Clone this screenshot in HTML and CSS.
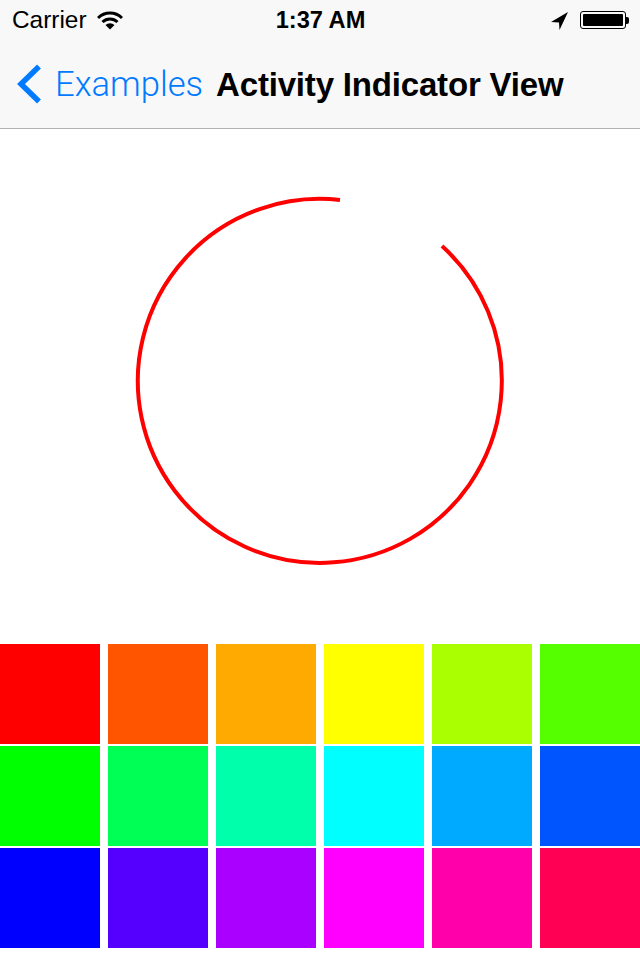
FILE: index.html
```html
<!DOCTYPE html>
<html lang="en">
<head>
  <meta charset="UTF-8" />
  <meta name="viewport" content="width=device-width, initial-scale=1.0"/>
  <title>Activity Indicator View</title>
  <link rel="stylesheet" href="styles.css">
</head>
<body>
  <div class="header">
    <div class="status-bar">
      <div class="status-left">
        <span class="carrier">Carrier</span>
        <svg class="wifi" width="26" height="20" viewBox="0 0 26 20">
          <path d="M1 8 A17 17 0 0 1 25 8" fill="none" stroke="#000" stroke-width="3"/>
          <path d="M5.5 12 A11 11 0 0 1 20.5 12" fill="none" stroke="#000" stroke-width="3"/>
          <path d="M8.5 15 L13 19.5 L17.5 15 A6.5 6.5 0 0 0 8.5 15 Z" fill="#000"/>
        </svg>
      </div>
      <span class="time">1:37 AM</span>
      <div class="status-right">
        <svg class="arrow" width="20" height="20" viewBox="0 0 20 20">
          <path d="M19 2 L2 12 L10 12.5 L10.5 20 Z" fill="#000"/>
        </svg>
        <div class="battery"><div class="battery-level"></div></div>
        <div class="battery-tip"></div>
      </div>
    </div>
    <div class="nav-bar">
      <svg class="back-chevron" width="26" height="40" viewBox="0 0 26 40">
        <path d="M23 2.5 L5 20 L23 37.5" fill="none" stroke="#007aff" stroke-width="5.5"/>
      </svg>
      <span class="back-label">Examples</span>
      <span class="nav-title">Activity Indicator View</span>
    </div>
  </div>

  <div class="spinner-area">
    <svg width="372" height="372" viewBox="0 0 372 372">
      <path d="M308 51 A182 182 0 1 1 206 5" fill="none" stroke="#ff0000" stroke-width="4"/>
    </svg>
  </div>

  <div class="swatches">
    <div class="swatch red"></div>
    <div class="swatch orange-red"></div>
    <div class="swatch orange"></div>
    <div class="swatch yellow"></div>
    <div class="swatch lime"></div>
    <div class="swatch chartreuse"></div>
    <div class="swatch green"></div>
    <div class="swatch spring"></div>
    <div class="swatch mint"></div>
    <div class="swatch cyan"></div>
    <div class="swatch sky"></div>
    <div class="swatch azure"></div>
    <div class="swatch blue"></div>
    <div class="swatch indigo"></div>
    <div class="swatch violet"></div>
    <div class="swatch magenta"></div>
    <div class="swatch pink"></div>
    <div class="swatch rose"></div>
  </div>
</body>
</html>
```
FILE: styles.css
```css
body {
  margin: 0;
  background-color: white;
  font-family: "Liberation Sans", Arial, sans-serif;
  color: black;
}
.header {
  height: 128px;
  background-color: #f8f8f8;
  border-bottom: 1px solid #b2b2b2;
}
.status-bar {
  display: grid;
  grid-template-columns: 1fr auto 1fr;
  align-items: center;
  height: 40px;
  padding: 0 11px 0 12px;
  font-size: 24.4px;
}
.status-left, .status-right {
  display: flex;
  align-items: center;
}
.status-right {
  justify-content: flex-end;
}
.wifi {
  margin-left: 10px;
}
.time {
  font-size: 23.6px;
  font-weight: bold;
}
.arrow {
  margin-right: 11px;
}
.battery {
  width: 46px;
  height: 18px;
  padding: 2px;
  box-sizing: border-box;
  border: 1px solid #000;
  border-radius: 3px;
}
.battery-level {
  height: 100%;
  background-color: #000;
  border-radius: 1px;
}
.battery-tip {
  width: 3px;
  height: 7px;
  background-color: #000;
  border-radius: 0 2px 2px 0;
}
.nav-bar {
  display: flex;
  align-items: center;
  height: 88px;
  padding-left: 16px;
}
.back-chevron {
  margin-right: 13px;
}
.back-label {
  margin-right: 13px;
  font-family: Roboto, "Liberation Sans", sans-serif;
  font-weight: 300;
  font-size: 34.6px;
  color: #007aff;
}
.nav-title {
  margin-top: 2px;
  font-weight: bold;
  font-size: 33px;
  letter-spacing: -0.18px;
}
.spinner-area {
  display: flex;
  justify-content: center;
  align-items: center;
  height: 503px;
  margin-bottom: 12px;
}
.swatches {
  display: grid;
  grid-template-columns: repeat(6, 100px);
  grid-auto-rows: 100px;
  column-gap: 8px;
  row-gap: 2px;
}
.red { background-color: #ff0000; }
.orange-red { background-color: #ff5500; }
.orange { background-color: #ffaa00; }
.yellow { background-color: #ffff00; }
.lime { background-color: #aaff00; }
.chartreuse { background-color: #55ff00; }
.green { background-color: #00ff00; }
.spring { background-color: #00ff55; }
.mint { background-color: #00ffaa; }
.cyan { background-color: #00ffff; }
.sky { background-color: #00aaff; }
.azure { background-color: #0055ff; }
.blue { background-color: #0000ff; }
.indigo { background-color: #5500ff; }
.violet { background-color: #aa00ff; }
.magenta { background-color: #ff00ff; }
.pink { background-color: #ff00aa; }
.rose { background-color: #ff0055; }
```
